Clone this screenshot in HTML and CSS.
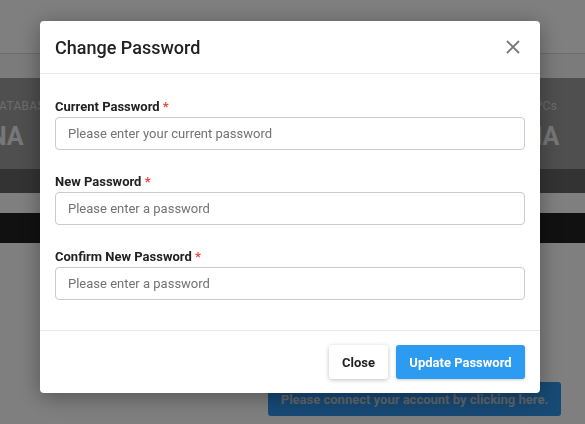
FILE: index.html
```html
<!DOCTYPE html>
<html lang="en">
<head>
<meta charset="utf-8">
<title>Change Password</title>
<link rel="stylesheet" href="styles.css">
</head>
<body>
<div class="app">
  <header class="topbar"></header>
  <div class="subbar"></div>
  <section class="stats">
    <div class="stat stat-left">
      <div class="stat-label stat-label-left">DATABASES</div>
      <div class="stat-value stat-value-left">NA</div>
    </div>
    <div class="stat stat-right">
      <div class="stat-label">VPCs</div>
      <div class="stat-value">NA</div>
    </div>
  </section>
  <div class="band"></div>
  <div class="gap"></div>
  <div class="darkbar"></div>
  <div class="content">
    <button class="connect" type="button">Please connect your account by clicking here.</button>
  </div>
</div>

<div class="overlay">
  <div class="modal" role="dialog" aria-labelledby="modal-title">
    <div class="modal-header">
      <h2 class="modal-title" id="modal-title">Change Password</h2>
      <button class="modal-close" type="button" aria-label="Close">
        <svg width="14" height="14" viewBox="0 0 14 14"><path d="M1 1 L13 13 M13 1 L1 13" stroke="#777" stroke-width="1.8" fill="none"/></svg>
      </button>
    </div>
    <div class="modal-body">
      <div class="field">
        <label class="field-label">Current Password <span class="req">*</span></label>
        <input class="field-input" type="password" placeholder="Please enter your current password">
      </div>
      <div class="field">
        <label class="field-label">New Password <span class="req">*</span></label>
        <input class="field-input" type="password" placeholder="Please enter a password">
      </div>
      <div class="field">
        <label class="field-label">Confirm New Password <span class="req">*</span></label>
        <input class="field-input" type="password" placeholder="Please enter a password">
      </div>
    </div>
    <div class="modal-footer">
      <button class="btn btn-light" type="button">Close</button>
      <button class="btn btn-primary" type="button">Update Password</button>
    </div>
  </div>
</div>
</body>
</html>
```

FILE: styles.css
```css
* { box-sizing: border-box; }
html, body { margin: 0; padding: 0; }
body {
  font-family: Roboto, "Liberation Sans", Arial, sans-serif;
  background: #ffffff;
  width: 585px;
  height: 424px;
  overflow: hidden;
}

.app { display: flex; flex-direction: column; }
.topbar { height: 54px; background: #ffffff; border-bottom: 1px solid #d8d8d8; }
.subbar { height: 24px; background: #f6f6f6; }
.stats {
  height: 91px;
  background: #9e9e9e;
  display: flex;
  padding-top: 21px;
  overflow: hidden;
}
.stat { display: flex; flex-direction: column; }
.stat-left { align-items: flex-start; }
.stat-right { align-items: center; width: 50px; margin-left: auto; margin-right: 18px; }
.stat-label { font-size: 12px; line-height: 14px; color: #d8d8d8; letter-spacing: 0.3px; white-space: nowrap; }
.stat-label-left { margin-left: -9px; }
.stat-value { font-size: 25px; font-weight: 700; line-height: 30px; margin-top: 9px; color: #eeeeee; white-space: nowrap; }
.stat-value-left { margin-left: -11px; }
.band { height: 24px; background: #666666; }
.gap { height: 20px; background: #ffffff; }
.darkbar { height: 30px; background: #222222; }
.content { display: flex; justify-content: flex-end; padding: 139px 24px 0 0; }
.connect {
  width: 293px;
  height: 34px;
  border: none;
  border-radius: 3px;
  background: #2e94ea;
  color: #c4ccd4;
  font-family: inherit;
  font-size: 13px;
  font-weight: 700;
}

.overlay {
  position: fixed;
  inset: 0;
  background: rgba(0, 0, 0, 0.5);
  display: flex;
  align-items: flex-start;
  padding: 21px 0 0 40px;
}
.modal {
  width: 500px;
  background: #ffffff;
  border-radius: 4px;
  box-shadow: 0 4px 22px rgba(0, 0, 0, 0.35);
  display: flex;
  flex-direction: column;
}
.modal-header {
  height: 53px;
  display: flex;
  align-items: center;
  justify-content: space-between;
  padding: 1px 20px 0 15px;
  border-bottom: 1px solid #e2e7ec;
}
.modal-title {
  margin: 0;
  font-size: 18px;
  font-weight: 500;
  color: #212121;
  line-height: 27px;
}
.modal-close {
  border: none;
  background: none;
  padding: 0;
  width: 14px;
  height: 14px;
  display: flex;
  margin-top: -2px;
}

.modal-body { padding: 22px 15px 9px; display: flex; flex-direction: column; }
.field { display: flex; flex-direction: column; margin-bottom: 21px; }
.field-label {
  font-size: 13px;
  font-weight: 700;
  line-height: 21px;
  color: #212121;
}
.req { color: #f0413c; font-weight: 700; }
.field-input {
  height: 33px;
  border: 1px solid #cbcbcb;
  border-radius: 4px;
  padding: 0 12px;
  font-family: inherit;
  font-size: 13px;
  color: #212121;
}
.field-input::placeholder { color: #737373; }

.modal-footer {
  border-top: 1px solid #e2e7ec;
  padding: 14px 15px 14px;
  display: flex;
  justify-content: flex-end;
  gap: 8px;
}
.btn {
  height: 34px;
  border: none;
  border-radius: 3px;
  font-family: inherit;
  font-size: 13px;
  font-weight: 700;
}
.btn-light {
  width: 59px;
  background: #ffffff;
  color: #212121;
  box-shadow: 0 1px 4px rgba(0, 0, 0, 0.25);
}
.btn-primary {
  width: 129px;
  background: #2d9bef;
  color: #ffffff;
  box-shadow: 0 1px 3px rgba(0, 0, 0, 0.2);
}
```
